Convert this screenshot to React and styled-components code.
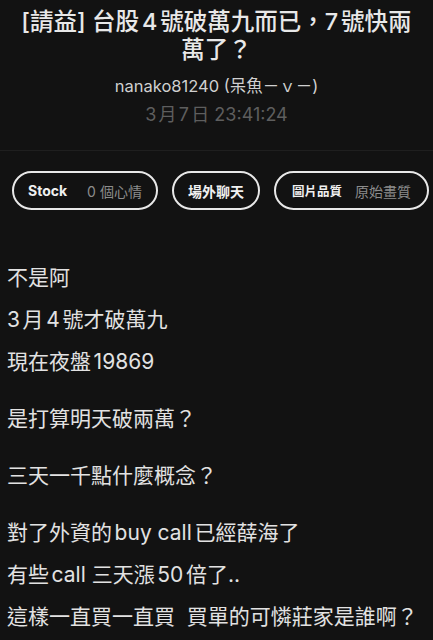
import React from 'react'
import styled, { createGlobalStyle } from 'styled-components'

const GlobalStyle = createGlobalStyle`
  html, body {
    margin: 0;
    padding: 0;
    background: #121212;
  }
  body {
    font-family: Inter, "Noto Sans CJK TC", sans-serif;
    color: #e2e2e2;
    text-autospace: normal;
  }
`

const Page = styled.div`
  width: 433px;
  min-height: 640px;
  background: #121212;
`

const Header = styled.header`
  display: flex;
  flex-direction: column;
  align-items: center;
  padding: 8px 12px 23px;
  border-bottom: 1px solid #1f1f1f;
`

const Title = styled.h1`
  margin: 0;
  font-size: 23.5px;
  line-height: 28px;
  font-weight: 500;
  text-align: center;
  color: #e8e8e8;
`

const Author = styled.div`
  margin-top: 11px;
  font-size: 16.5px;
  line-height: 22px;
  color: #d0d0d0;
`

const Time = styled.div`
  margin-top: 6px;
  font-size: 18px;
  line-height: 24px;
  color: #5e5e5e;
`

const Chips = styled.div`
  display: flex;
  gap: 14px;
  padding: 20px 12px 0;
`

const Chip = styled.div`
  display: flex;
  align-items: center;
  gap: ${p => p.gap || 12}px;
  height: 39px;
  box-sizing: border-box;
  padding: 0 ${p => p.pad || 14}px;
  border: 2px solid #e8e8e8;
  border-radius: 20px;
  font-size: 14px;
  white-space: nowrap;
`

const ChipLabel = styled.span`
  font-weight: 700;
  font-size: ${p => p.size || 14}px;
  color: #f0f0f0;
`

const ChipValue = styled.span`
  color: #8c8c8c;
`

const Content = styled.article`
  padding: 47px 7px 0;
  font-size: 21px;
  line-height: 42px;
  color: #e2e2e2;
  white-space: pre-wrap;
`

const Para = styled.p`
  margin: 0 0 15px;
`

const paras = [
  ['不是阿', '3月4號才破萬九', '現在夜盤19869'],
  ['是打算明天破兩萬？'],
  ['三天一千點什麼概念？'],
  ['對了外資的buy call已經薛海了', '有些call 三天漲50倍了..', '這樣一直買一直買  買單的可憐莊家是誰啊？']
]

export default function App () {
  return (
    <Page>
      <GlobalStyle />
      <Header>
        <Title>[請益] 台股4號破萬九而已，7號快兩<br />萬了？</Title>
        <Author>nanako81240 (呆魚－ｖ－)</Author>
        <Time>3月7日 23:41:24</Time>
      </Header>
      <Chips>
        <Chip gap={20}>
          <ChipLabel>Stock</ChipLabel>
          <ChipValue>0 個心情</ChipValue>
        </Chip>
        <Chip>
          <ChipLabel>場外聊天</ChipLabel>
        </Chip>
        <Chip gap={13} pad={16}>
          <ChipLabel size={12.5}>圖片品質</ChipLabel>
          <ChipValue>原始畫質</ChipValue>
        </Chip>
      </Chips>
      <Content>
        {paras.map((lines, i) => (
          <Para key={i}>
            {lines.join('\n')}
          </Para>
        ))}
      </Content>
    </Page>
  )
}
